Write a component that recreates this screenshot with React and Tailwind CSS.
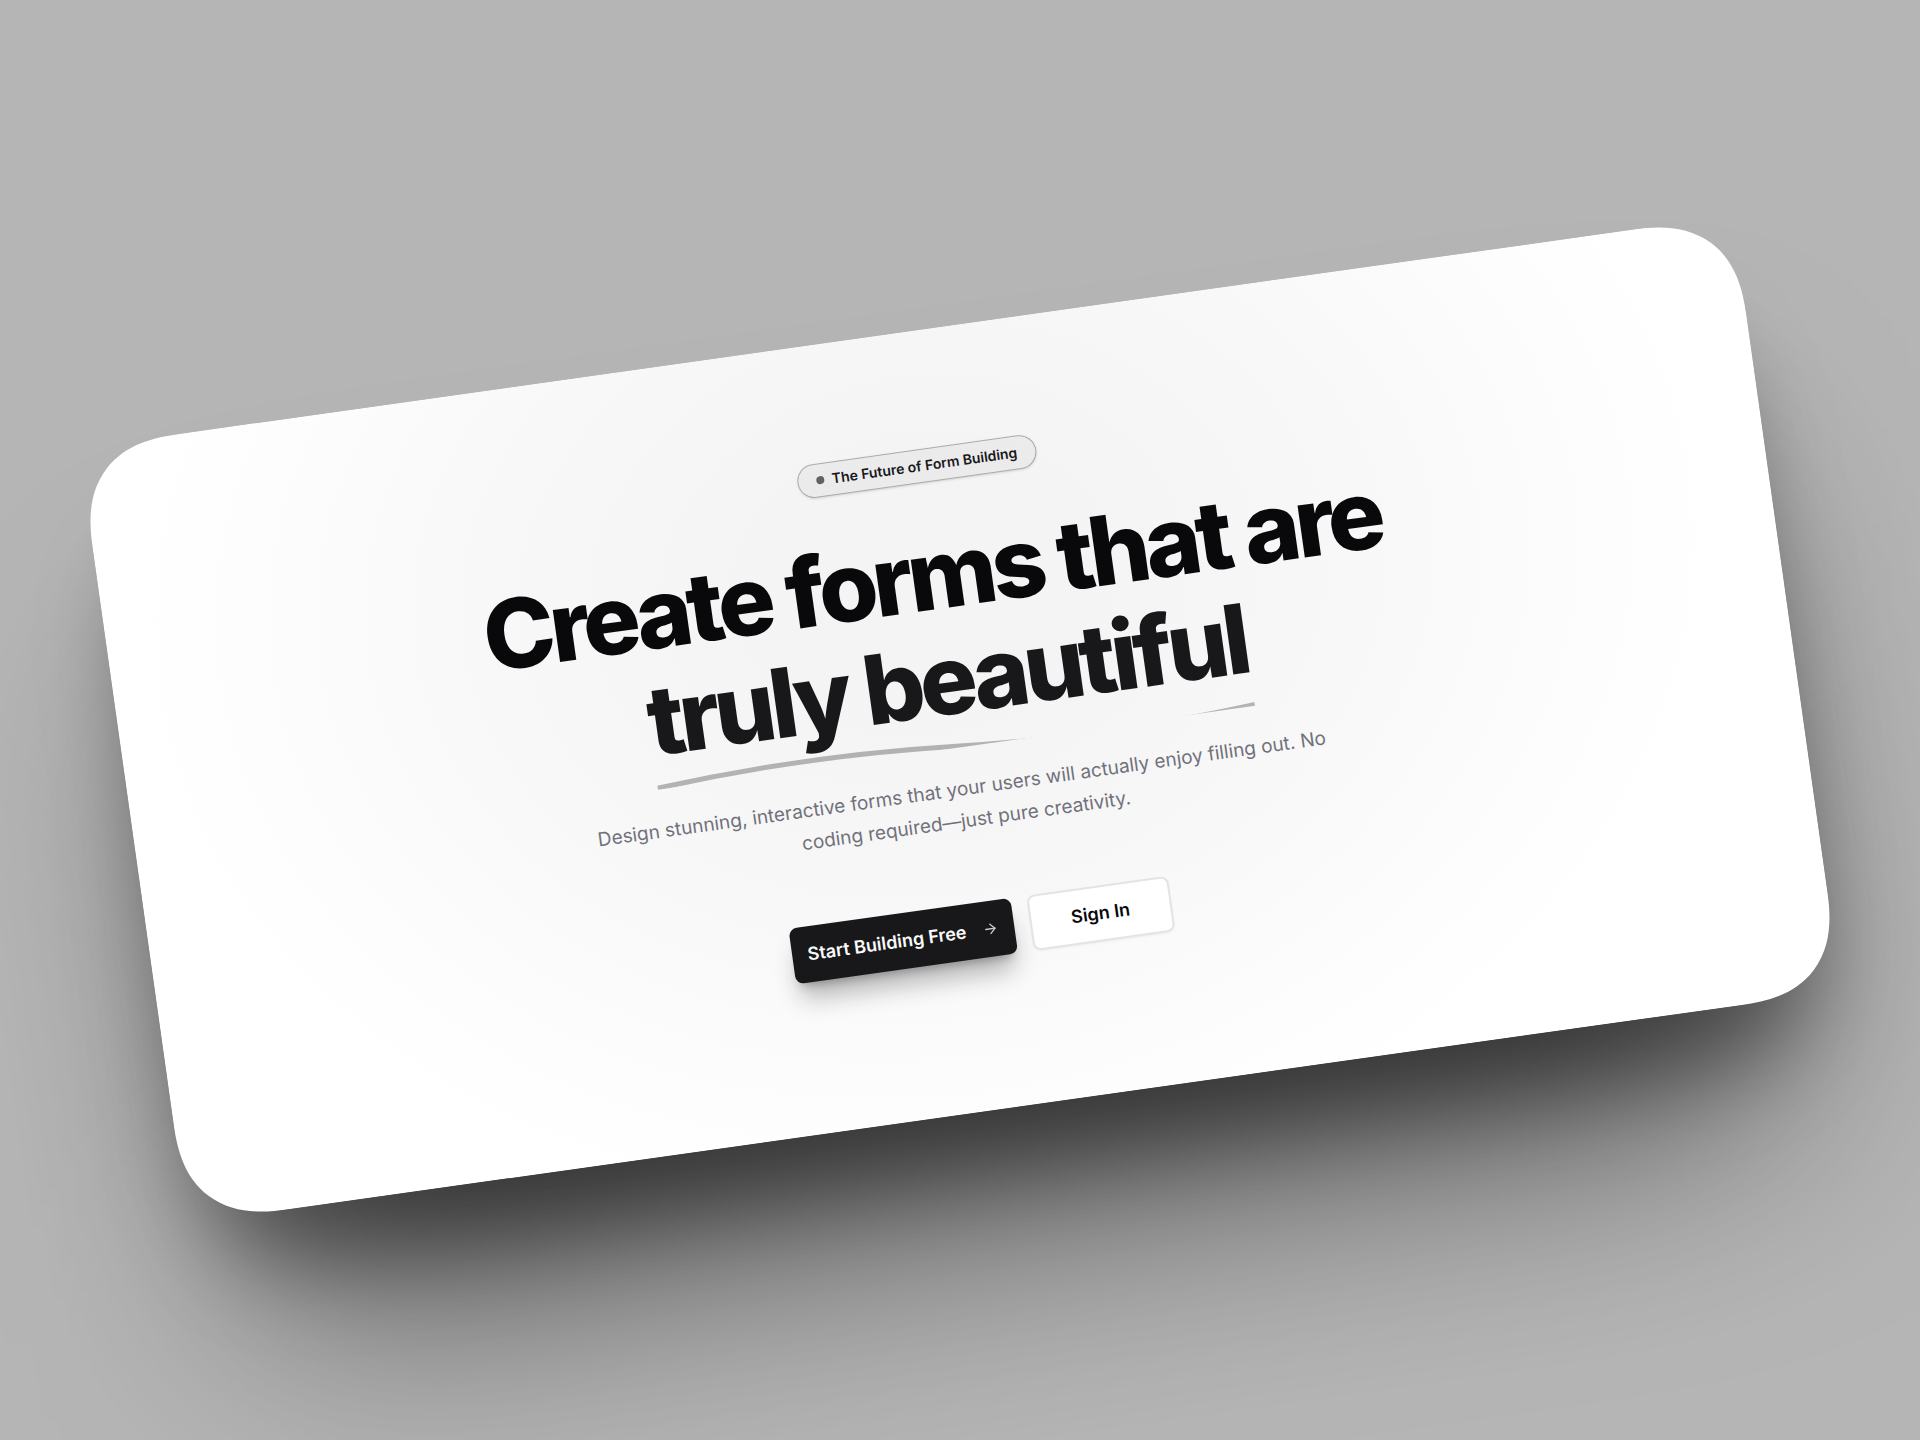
import { ArrowRight } from "lucide-react";

const Badge = ({ children }) => (
  <div className="inline-flex items-center gap-2 rounded-full border border-zinc-900/30 bg-zinc-900/4 px-4.5 py-1.5 text-sm font-semibold text-zinc-900 shadow-sm">
    <span className="h-2 w-2 rounded-full bg-zinc-900/65" />
    {children}
  </div>
);

const Underline = () => (
  <svg
    className="absolute -bottom-4 left-0 h-3 w-full text-zinc-900/30"
    viewBox="0 0 600 12"
    preserveAspectRatio="none"
    fill="none"
    aria-hidden="true"
  >
    <path d="M0 10.5 Q150 -1.5 300 10.5 T600 10.5" stroke="currentColor" strokeWidth="5" />
  </svg>
);

const App = () => {
  return (
    <main className="flex min-h-screen items-center justify-center overflow-hidden bg-[#b5b5b5] font-['Inter',sans-serif]">
      <div className="relative isolate w-[87%] -rotate-8">
        {/* Soft floor shadows under the card */}
        <div className="absolute inset-20 -z-10 translate-y-44 bg-black/60 blur-[120px]" />
        <div className="absolute inset-6 -z-10 translate-y-20 rounded-[100px] bg-black/40 blur-[45px]" />

        <section className="rounded-[100px] bg-white bg-[radial-gradient(ellipse_48%_80%_at_49%_32%,#f4f4f4_0%,#f4f4f4_20%,#f8f8f8_55%,#fdfdfd_85%,#ffffff_100%)] pt-[118px] pr-4 pb-38 [corner-shape:superellipse(1.3)]">
          <div className="flex flex-col items-center text-center">
            <Badge>The Future of Form Building</Badge>

            {/* Headline */}
            <h1 className="mt-10 text-8xl leading-[1.1] font-extrabold tracking-tighter text-zinc-950">
              Create forms that are
              <br />
              <span className="relative inline-block text-zinc-900">
                truly beautiful
                <Underline />
              </span>
            </h1>

            <p className="mt-10.5 max-w-3xl text-[19px] leading-8 text-zinc-500">
              Design stunning, interactive forms that your users will actually enjoy filling out. No coding
              required—just pure creativity.
            </p>

            {/* Actions */}
            <div className="mt-16.5 flex items-center gap-4 text-lg font-semibold">
              <button
                type="button"
                className="flex h-14 items-center gap-4 rounded-lg bg-zinc-900 px-4 text-zinc-50 shadow-xl shadow-zinc-900/30"
              >
                Start Building Free
                <ArrowRight className="h-4 w-4 opacity-80" />
              </button>
              <button
                type="button"
                className="h-14 rounded-lg border-2 border-zinc-200 bg-white px-10 text-zinc-950 shadow-xs"
              >
                Sign In
              </button>
            </div>
          </div>
        </section>
      </div>
    </main>
  );
};

export default App;
